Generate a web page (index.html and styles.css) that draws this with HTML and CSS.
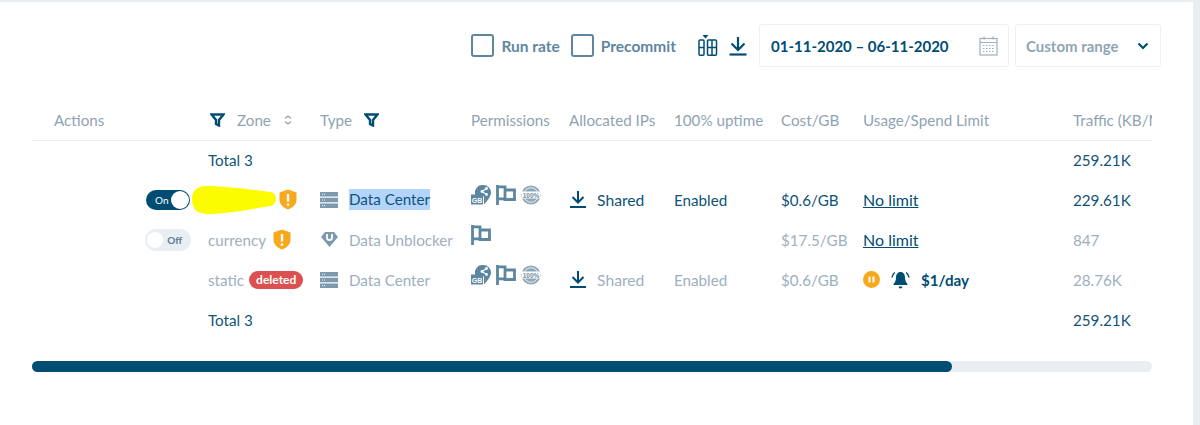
FILE: index.html
```html
<!DOCTYPE html>
<html lang="en">
<head>
    <meta charset="UTF-8">
    <title>Zones</title>
    <link rel="stylesheet" href="styles.css">
</head>
<body>

    <div class="card">
        <div class="toolbar">
            <label class="check"><span class="box"></span>Run rate</label>
            <label class="check"><span class="box"></span>Precommit</label>
            <svg class="tool-columns" width="20" height="21" viewBox="0 0 20 21" fill="none" stroke="#004d74" stroke-width="1.500">
                <path d="M4.500 0h6L7.500 3.500z" fill="#004d74" stroke="none"/>
                <rect x="1" y="5" width="5" height="15.200" rx="1"/>
                <path d="M1 12.500h5"/>
                <rect x="9.500" y="5" width="9" height="15.200" rx="1"/>
                <path d="M9.500 12.500h9M14 5v15.200"/>
            </svg>
            <svg class="tool-download" width="20" height="20" viewBox="0 0 20 20" fill="none" stroke="#004d74" stroke-width="2.200">
                <path d="M10 1v12M3.500 7.500L10 14l6.500-6.500"/>
                <path d="M1.500 18.500h17"/>
            </svg>
            <div class="date-box">
                <span>01-11-2020 – 06-11-2020</span>
                <svg width="19" height="20" viewBox="0 0 19 20" fill="none" stroke="#9db0bf" stroke-width="1.200">
                    <rect x="1" y="2.500" width="17" height="16.500"/>
                    <path d="M1 6.500h17M5 .5v3M14 .5v3"/>
                    <path d="M4 9.500h11M4 12.500h11M4 15.500h11" stroke-dasharray="1.500 1.500"/>
                </svg>
            </div>
            <div class="range-box">
                <span>Custom range</span>
                <svg width="12" height="8" viewBox="0 0 12 8" fill="none" stroke="#004d74" stroke-width="2.200"><path d="M1.500 1.500L6 6l4.500-4.500"/></svg>
            </div>
        </div>

        <div class="table">
            <div class="row head">
                <div class="cell cell-actions">Actions</div>
                <div class="cell">
                    <svg class="funnel" width="15" height="14" viewBox="0 0 15 14" fill="none" stroke="#004d74" stroke-width="2.400"><path d="M1.500 1.500h12L9 7v5.500L6 11V7z"/></svg>
                    <span>Zone</span>
                    <svg class="sorter" width="8" height="10" viewBox="0 0 8 10" fill="none" stroke="#8fa3b3" stroke-width="1.200"><path d="M1 3.500L4 1l3 2.500M1 6.500L4 9l3-2.500"/></svg>
                </div>
                <div class="cell">
                    <span>Type</span>
                    <svg class="funnel funnel-type" width="15" height="14" viewBox="0 0 15 14" fill="none" stroke="#004d74" stroke-width="2.400"><path d="M1.500 1.500h12L9 7v5.500L6 11V7z"/></svg>
                </div>
                <div class="cell">Permissions</div>
                <div class="cell">Allocated IPs</div>
                <div class="cell">100% uptime</div>
                <div class="cell">Cost/GB</div>
                <div class="cell">Usage/Spend Limit</div>
                <div class="cell">Traffic (KB/Mo)</div>
            </div>

            <div class="row dark">
                <div class="cell cell-actions"></div>
                <div class="cell">Total 3</div>
                <div class="cell"></div><div class="cell"></div><div class="cell"></div>
                <div class="cell"></div><div class="cell"></div><div class="cell"></div>
                <div class="cell">259.21K</div>
            </div>

            <div class="row row-data dark">
                <div class="cell cell-actions cell-toggle">
                    <div class="toggle toggle-on"><span>On</span><i></i></div>
                </div>
                <div class="cell">
                    <svg class="scribble" width="84" height="30" viewBox="0 0 84 30"><path d="M14 1C35 1 60 5 78 7c8 1 8 13 0 14C60 24 35 29 16 29 5 29 0 24 0 14 0 6 5 1 14 1z" fill="#fcfc00"/></svg>
                    <svg class="shield" width="18" height="21" viewBox="0 0 18 21"><path d="M9 .5l8.500 3v7c0 5-4 8.500-8.500 10C4.500 19 .5 15.500.5 10.500v-7z" fill="#f8a81c"/><path d="M9 5v7.500M9 14.500v2.200" stroke="#fff" stroke-width="2.400"/></svg>
                </div>
                <div class="cell">
                    <svg class="server" width="18" height="16" viewBox="0 0 18 16"><path d="M0 0h18v4.500H0zM0 5.700h18v4.600H0zM0 11.500h18V16H0z" fill="#7d99ad"/><path d="M2 2.200h4M2 8h4M2 13.700h4" stroke="#fff" stroke-width="1" stroke-dasharray="1 1"/></svg>
                    <span class="selected">Data Center</span>
                </div>
                <div class="cell perms">
                    <svg width="20" height="20" viewBox="0 0 20 20"><path d="M12.500 0a7.500 7.500 0 0 1 7.500 7.500c0 4-3.500 8-7 12v-8H5.200A7.500 7.500 0 0 1 12.500 0z" fill="#5d87a1"/><rect y="9.500" width="12" height="10" fill="#5d87a1"/><text x="6" y="17.500" class="gb">GB</text><path d="M15.500 3.500L11 6.500l4.500 3" fill="none" stroke="#fff" stroke-width="1.200"/><circle cx="15.500" cy="3.500" r="1.400" fill="#fff"/><circle cx="11" cy="6.500" r="1.400" fill="#fff"/><circle cx="15.500" cy="9.500" r="1.400" fill="#fff"/></svg>
                    <svg width="20" height="20" viewBox="0 0 20 20" fill="none" stroke="#5d87a1" stroke-width="2.800"><path d="M1.500 0v20M1.500 1.800h7.500v12H1.500M9 5h9.500v9.500H9z"/></svg>
                    <svg width="20" height="20" viewBox="0 0 20 20" fill="none"><circle cx="10" cy="10" r="9.500" fill="#8fa8b8"/><circle cx="10" cy="10" r="7.300" stroke="#fff" stroke-width=".8"/><rect x="1" y="6.500" width="18" height="7" fill="#fff"/><text x="10" y="12.500" class="pct">100%</text></svg>
                </div>
                <div class="cell">
                    <svg class="share-down" width="16" height="17" viewBox="0 0 16 17" fill="none" stroke="#004d74" stroke-width="2"><path d="M8 0v11M2.500 6l5.500 5.500L13.500 6"/><path d="M0 16h16"/></svg>
                    <span class="shared">Shared</span>
                </div>
                <div class="cell">Enabled</div>
                <div class="cell">$0.6/GB</div>
                <div class="cell"><a class="limit">No limit</a></div>
                <div class="cell">229.61K</div>
            </div>

            <div class="row row-data muted">
                <div class="cell cell-actions cell-toggle">
                    <div class="toggle toggle-off"><i></i><span>Off</span></div>
                </div>
                <div class="cell">
                    <span>currency</span>
                    <svg class="shield shield-text" width="18" height="21" viewBox="0 0 18 21"><path d="M9 .5l8.500 3v7c0 5-4 8.500-8.500 10C4.500 19 .5 15.500.5 10.500v-7z" fill="#f8a81c"/><path d="M9 5v7.500M9 14.500v2.200" stroke="#fff" stroke-width="2.400"/></svg>
                </div>
                <div class="cell">
                    <svg class="gem" width="17" height="15" viewBox="0 0 17 15"><path d="M4 0h9l4 5-8.500 10L0 5z" fill="#7d99ad"/><path d="M6 2v3.500c0 3.500 5 3.500 5 0V2" fill="none" stroke="#fff" stroke-width="1.800"/></svg>
                    <span>Data Unblocker</span>
                </div>
                <div class="cell perms">
                    <svg width="20" height="20" viewBox="0 0 20 20" fill="none" stroke="#5d87a1" stroke-width="2.800"><path d="M1.500 0v20M1.500 1.800h7.500v12H1.500M9 5h9.500v9.500H9z"/></svg>
                </div>
                <div class="cell"></div>
                <div class="cell"></div>
                <div class="cell">$17.5/GB</div>
                <div class="cell"><a class="limit">No limit</a></div>
                <div class="cell">847</div>
            </div>

            <div class="row row-data muted">
                <div class="cell cell-actions"></div>
                <div class="cell">
                    <span>static</span>
                    <span class="badge">deleted</span>
                </div>
                <div class="cell">
                    <svg class="server" width="18" height="16" viewBox="0 0 18 16"><path d="M0 0h18v4.500H0zM0 5.700h18v4.600H0zM0 11.500h18V16H0z" fill="#7d99ad"/><path d="M2 2.200h4M2 8h4M2 13.700h4" stroke="#fff" stroke-width="1" stroke-dasharray="1 1"/></svg>
                    <span>Data Center</span>
                </div>
                <div class="cell perms">
                    <svg width="20" height="20" viewBox="0 0 20 20"><path d="M12.500 0a7.500 7.500 0 0 1 7.500 7.500c0 4-3.500 8-7 12v-8H5.200A7.500 7.500 0 0 1 12.500 0z" fill="#5d87a1"/><rect y="9.500" width="12" height="10" fill="#5d87a1"/><text x="6" y="17.500" class="gb">GB</text><path d="M15.500 3.500L11 6.500l4.500 3" fill="none" stroke="#fff" stroke-width="1.200"/><circle cx="15.500" cy="3.500" r="1.400" fill="#fff"/><circle cx="11" cy="6.500" r="1.400" fill="#fff"/><circle cx="15.500" cy="9.500" r="1.400" fill="#fff"/></svg>
                    <svg width="20" height="20" viewBox="0 0 20 20" fill="none" stroke="#5d87a1" stroke-width="2.800"><path d="M1.500 0v20M1.500 1.800h7.500v12H1.500M9 5h9.500v9.500H9z"/></svg>
                    <svg width="20" height="20" viewBox="0 0 20 20" fill="none"><circle cx="10" cy="10" r="9.500" fill="#8fa8b8"/><circle cx="10" cy="10" r="7.300" stroke="#fff" stroke-width=".8"/><rect x="1" y="6.500" width="18" height="7" fill="#fff"/><text x="10" y="12.500" class="pct">100%</text></svg>
                </div>
                <div class="cell">
                    <svg class="share-down" width="16" height="17" viewBox="0 0 16 17" fill="none" stroke="#004d74" stroke-width="2"><path d="M8 0v11M2.500 6l5.500 5.500L13.500 6"/><path d="M0 16h16"/></svg>
                    <span class="shared">Shared</span>
                </div>
                <div class="cell">Enabled</div>
                <div class="cell">$0.6/GB</div>
                <div class="cell spend">
                    <svg width="17" height="17" viewBox="0 0 17 17"><circle cx="8.500" cy="8.500" r="8.500" fill="#f8a81c"/><path d="M6.500 5.500v6M10.500 5.500v6" stroke="#fff" stroke-width="2"/></svg>
                    <svg class="bell" width="19" height="18" viewBox="0 0 19 18"><path d="M9.500 1c3 0 4.500 2.500 4.500 5.500 0 3 1 5 2.500 6.500v1h-14v-1C4 11.500 5 9.500 5 6.500 5 3.500 6.500 1 9.500 1z" fill="#004d74"/><path d="M7.500 15.500h4a2 2 0 0 1-4 0z" fill="#004d74"/><path d="M3.800 1.500C2.200 2.700 1.300 4.300 1 6.500M15.200 1.500c1.600 1.200 2.500 2.800 2.800 5" stroke="#004d74" stroke-width="1.500" fill="none"/></svg>
                    <b>$1/day</b>
                </div>
                <div class="cell">28.76K</div>
            </div>

            <div class="row row-data dark">
                <div class="cell cell-actions"></div>
                <div class="cell">Total 3</div>
                <div class="cell"></div><div class="cell"></div><div class="cell"></div>
                <div class="cell"></div><div class="cell"></div><div class="cell"></div>
                <div class="cell">259.21K</div>
            </div>
        </div>

        <div class="scrollbar"><div class="thumb"></div></div>
    </div>

</body>
</html>
```

FILE: styles.css
```css
body {
    font-family: Lato, "Open Sans", sans-serif;
    font-size: 15.2px;
    background-color: #e9eef3;
    margin: 0;
    padding: 2px 7px 0 0;
    height: 423px;
    overflow: hidden;
}
.card {
    background-color: white;
    height: 423px;
    box-sizing: border-box;
    padding: 22px 32px 0 32px;
}

/* toolbar */
.toolbar {
    display: flex;
    align-items: center;
    height: 43px;
    justify-content: flex-end;
}
.check {
    display: flex;
    align-items: center;
    gap: 7px;
    color: #5f86a1;
    font-size: 15.5px;
    font-weight: 700;
    margin-right: 11px;
}
.box {
    width: 19px;
    height: 19px;
    border: 2px solid #5f86a1;
    border-radius: 3px;
}
.tool-columns {
    margin-left: 11px;
}
.tool-download {
    margin-left: 10px;
    margin-right: 11px;
}
.date-box, .range-box {
    display: flex;
    align-items: center;
    justify-content: space-between;
    box-sizing: border-box;
    height: 43px;
    border: 1px solid #eef1f4;
    border-radius: 3px;
    font-size: 15px;
    font-weight: 700;
}
.date-box {
    width: 250px;
    padding: 0 10px 0 11px;
    color: #004d74;
}
.range-box {
    width: 146px;
    margin-left: 6px;
    padding: 0 11px 0 10px;
    color: #8fa5b5;
}

/* table */
.table {
    margin-top: 33px;
    width: 1120px;
    overflow: hidden;
}
.row {
    display: grid;
    grid-template-columns: 176px 112px 151px 98px 105px 107px 82px 210px 100px;
    height: 40px;
}
.row-data {
    height: 39px;
    padding-bottom: 1px;
}
.head {
    box-shadow: 0 1px 0 #edf0f3;
    color: #8fa3b3;
}
.dark {
    color: #0f5378;
}
.muted {
    color: #9db0bf;
}
.cell {
    display: flex;
    align-items: center;
    white-space: nowrap;
}
.cell-actions {
    padding-left: 22px;
}
.cell-toggle {
    justify-content: flex-end;
    padding-right: 18px;
}
.funnel {
    margin-left: 2px;
    margin-right: 12px;
}
.funnel-type {
    margin-left: 12px;
}
.sorter {
    margin-left: 13px;
}
.toggle {
    display: flex;
    align-items: center;
    justify-content: space-between;
    box-sizing: border-box;
    border-radius: 11px;
    font-size: 10px;
}
.toggle i {
    border-radius: 50%;
    background-color: white;
}
.toggle-on {
    width: 44px;
    height: 20px;
    background-color: #004d74;
    color: white;
    padding: 0 1px 0 9px;
}
.toggle-on i {
    width: 18px;
    height: 18px;
}
.toggle-off {
    width: 46px;
    height: 22px;
    margin-right: -1px;
    background-color: #e9eef3;
    color: #5f7c90;
    font-weight: 700;
    padding: 0 9px 0 2px;
}
.toggle-off i {
    width: 16px;
    height: 16px;
}
.scribble {
    margin-left: -16px;
    margin-right: 3px;
}
.shield-text {
    margin-left: 7px;
}
.server {
    margin-right: 11px;
}
.gem {
    margin-left: 1px;
    margin-right: 11px;
}
.selected {
    background-color: #b4d5fb;
    line-height: 21px;
}
.perms {
    gap: 5px;
    padding-bottom: 10px;
}
.gb {
    font-family: "Liberation Sans", sans-serif;
    font-size: 7px;
    font-weight: 700;
    fill: white;
    text-anchor: middle;
}
.pct {
    font-family: "Liberation Sans", sans-serif;
    font-size: 6.500px;
    font-weight: 700;
    fill: #6f8c9f;
    text-anchor: middle;
}
.share-down {
    margin-left: 1px;
    margin-right: 11px;
}
.shared {
    font-size: 15.7px;
    padding-top: 1px;
}
.limit {
    text-decoration: underline;
    color: #004d74;
    font-size: 16px;
}
.badge {
    background-color: #dc5050;
    color: white;
    font-size: 12px;
    font-weight: 700;
    padding: 1px 7px 2px;
    border-radius: 9px;
    margin-left: 5px;
}
.spend {
    color: #004d74;
}
.bell {
    margin-left: 11px;
    margin-right: 11px;
}

/* scrollbar */
.scrollbar {
    margin-top: 21px;
    width: 1120px;
    height: 11px;
    border-radius: 6px;
    background-color: #e9eef3;
}
.thumb {
    width: 920px;
    height: 11px;
    border-radius: 6px;
    background-color: #004d74;
}
```
